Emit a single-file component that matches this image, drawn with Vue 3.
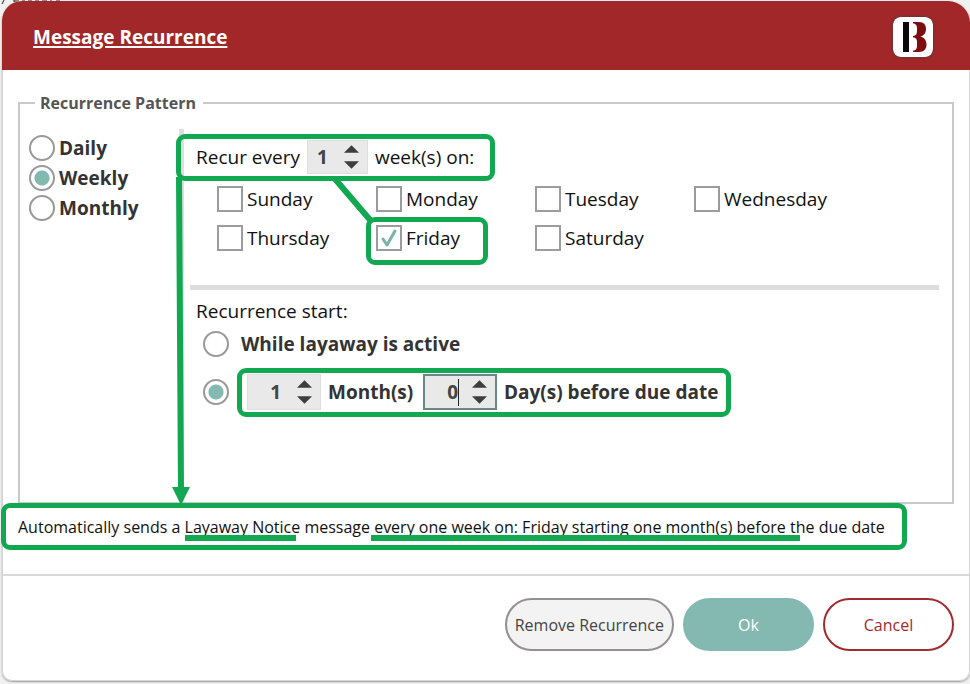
<script setup>
import { ref } from 'vue'

const patterns = ['Daily', 'Weekly', 'Monthly']
const pattern = ref('Weekly')
const days = ['Sunday', 'Monday', 'Tuesday', 'Wednesday', 'Thursday', 'Friday', 'Saturday']
const selectedDays = ref(['Friday'])
const start = ref('before')
const weeks = ref(1)
const months = ref(1)
const dueDays = ref(0)
</script>

<template>
  <div class="page">
    <svg class="backdrop" viewBox="0 0 64 4" aria-hidden="true">
      <path d="M4 0L2 4M14 0V2M14 1H19M22 1H25M28 1H32M35 1H39M42 1H47M50 1H52M56 1H60" />
    </svg>
    <main class="dialog">
      <header class="header">
        <h1>Message Recurrence</h1>
        <svg class="logo" viewBox="0 0 40 40" aria-hidden="true">
          <rect width="40" height="40" rx="7" fill="#fff" />
          <rect x="10" y="5" width="6" height="30" fill="#0c0809" />
          <path d="M20 5H26C31 5 33 8 33 12C33 16 31 18.500 27.500 19.500C31.500 20.500 33.500 24 33.500 27.500C33.500 32 31 35 26 35H20V33.800C22.500 33.500 24 32 24 29V25C24 22 23 20.500 20 20.200V19C23 18.500 24 17 24 14V11C24 8 22.500 6.500 20 6.200Z" fill="#7d0d10" />
        </svg>
      </header>

      <form class="body" @submit.prevent>
        <fieldset class="pattern">
          <legend>Recurrence Pattern</legend>
          <div class="columns">
            <div class="kinds">
              <label v-for="p in patterns" :key="p" class="choice">
                <input v-model="pattern" type="radio" name="pattern" :value="p" />
                <span>{{ p }}</span>
              </label>
            </div>

            <div class="details">
              <div class="recur marked">
                <label for="weeks">Recur every</label>
                <div class="spinner small">
                  <input id="weeks" v-model.number="weeks" type="text" inputmode="numeric" />
                  <div class="arrows">
                    <button type="button" aria-label="More weeks" @click="weeks++"><svg viewBox="0 0 16 8"><path d="M0 8L8 0L16 8Z" /></svg></button>
                    <button type="button" aria-label="Fewer weeks" @click="weeks--"><svg viewBox="0 0 16 8"><path d="M0 0L8 8L16 0Z" /></svg></button>
                  </div>
                </div>
                <span>week(s) on:</span>
              </div>

              <div class="days">
                <label v-for="d in days" :key="d" class="day" :class="{ marked: d === 'Friday' }">
                  <span class="tick">
                    <input v-model="selectedDays" type="checkbox" :value="d" />
                    <svg v-if="selectedDays.includes(d)" viewBox="0 0 26 26"><path d="M7 14L11 20L19 6" /></svg>
                  </span>
                  <span>{{ d }}</span>
                </label>
              </div>

              <hr />

              <p class="start-title">Recurrence start:</p>
              <label class="choice active-choice">
                <input v-model="start" type="radio" name="start" value="active" />
                <span>While layaway is active</span>
              </label>
              <div class="before">
                <input v-model="start" type="radio" name="start" value="before" aria-label="Before due date" />
                <div class="offset marked">
                  <div class="spinner">
                    <input id="months" v-model.number="months" type="text" inputmode="numeric" />
                    <div class="arrows">
                      <button type="button" aria-label="More months" @click="months++"><svg viewBox="0 0 16 8"><path d="M0 8L8 0L16 8Z" /></svg></button>
                      <button type="button" aria-label="Fewer months" @click="months--"><svg viewBox="0 0 16 8"><path d="M0 0L8 8L16 0Z" /></svg></button>
                    </div>
                  </div>
                  <label for="months">Month(s)</label>
                  <div class="spinner current">
                    <input id="due-days" v-model.number="dueDays" type="text" inputmode="numeric" />
                    <i class="caret"></i>
                    <div class="arrows">
                      <button type="button" aria-label="More days" @click="dueDays++"><svg viewBox="0 0 16 8"><path d="M0 8L8 0L16 8Z" /></svg></button>
                      <button type="button" aria-label="Fewer days" @click="dueDays--"><svg viewBox="0 0 16 8"><path d="M0 0L8 8L16 0Z" /></svg></button>
                    </div>
                  </div>
                  <label for="due-days">Day(s) before due date</label>
                </div>
              </div>

              <svg class="callouts" width="320" height="376" viewBox="0 0 320 376" aria-hidden="true">
                <path class="line" d="M0 48L2 362M156 50L192 92" />
                <path class="head" d="M-7 358H11L2 376Z" />
              </svg>
            </div>
          </div>
        </fieldset>

        <p class="summary"><span class="note marked">Automatically sends a <span class="key">Layaway Notice</span> message <span class="key wide">every one week on: Friday starting one month(s) before t</span>he due date</span></p>

        <footer class="actions">
          <button type="button" class="remove">Remove Recurrence</button>
          <button type="submit" class="ok">Ok</button>
          <button type="button" class="cancel">Cancel</button>
        </footer>
      </form>
    </main>
  </div>
</template>

<style>
body { background: #f1f1f1; }
</style>

<style scoped>
* { box-sizing: border-box; }
.page {
  position: relative;
  padding: 1px 0 2px 2px;
  font-family: "Segoe UI", "Open Sans", "Noto Sans", sans-serif;
  font-size: 19px;
  line-height: 26px;
  color: #111;
}
.backdrop { position: absolute; left: 0; top: 0; width: 64px; height: 4px; fill: none; stroke: #222; stroke-width: 1; }
.dialog {
  position: relative;
  border-radius: 20px 22px 10px 10px;
  background: #fff;
  box-shadow: 0 1px 2px #999;
}
.header {
  display: flex;
  align-items: center;
  justify-content: space-between;
  padding: 16px 37px 13px 31px;
  border-radius: 20px 22px 0 0;
  background: #a12729;
}
.header h1 { margin: 0; font-size: 19px; font-weight: 700; color: #fff; text-decoration: underline; text-decoration-thickness: 2px; text-underline-offset: 2px; }
.logo { width: 40px; height: 40px; border-radius: 8px; box-shadow: 0 0 2px 1px #6b3535; }
.body { border: solid #d4d4d4; border-width: 0 1px 1px; border-radius: 0 0 10px 10px; padding-top: 20px; }
.pattern { margin: 0 15px; padding: 0; border: 2px solid #c9c9c9; min-width: 0; }
legend { margin-left: 15px; padding: 0 7px 0 5px; font-size: 16px; font-weight: 700; line-height: 26px; color: #555; }
.columns { display: flex; padding-top: 13px; }
.kinds { display: flex; flex-direction: column; gap: 4px; width: 159px; padding: 6px 0 0 9px; }
.choice { display: flex; align-items: center; gap: 4px; font-weight: 700; color: #333; }
input[type="radio"] {
  appearance: none;
  flex: none;
  width: 26px;
  height: 26px;
  margin: 0;
  border: 2px solid #999;
  border-radius: 50%;
  background: #fff;
}
input[type="radio"]:checked { background: radial-gradient(circle, #83b9b1 7px, #fff 8px); }
.details { position: relative; flex: 1; padding: 11px 13px 92px 12px; border-left: 5px solid #dedede; }
.marked { position: relative; }
.marked::after {
  content: "";
  position: absolute;
  border: 5px solid #12a852;
  border-radius: 9px;
  pointer-events: none;
}
.recur { display: flex; align-items: center; gap: 7px; width: fit-content; }
.recur::after { inset: -6px -21px -7px -20px; }
.spinner { position: relative; display: flex; align-items: center; width: 74px; height: 36px; background: #e9e9e9; border: 1px solid #dedede; }
.spinner.small { width: 61px; height: 34px; }
.spinner input {
  flex: 1;
  min-width: 0;
  padding: 0 16px 0 0;
  border: 0;
  outline: 0;
  background: none;
  font: inherit;
  font-weight: 700;
  text-align: right;
  color: #444;
}
.spinner.current { border: 2px solid #668987; }
.current input { padding-right: 14px; }
.caret { position: absolute; left: 33px; top: 3px; width: 1px; height: 27px; background: #222; }
.arrows { display: flex; flex-direction: column; gap: 8px; padding-right: 8px; }
.arrows button { display: block; padding: 0; border: 0; background: none; width: 15px; height: 8px; }
.arrows svg { display: block; width: 15px; height: 8px; fill: #3d3d3d; }
.days { display: grid; grid-template-columns: repeat(4, 159px); gap: 13px 0; padding: 12px 0 0 21px; }
.day { display: flex; align-items: center; gap: 4px; width: fit-content; }
.day.marked::after { inset: -8px -28px -14px -10px; }
.tick { position: relative; width: 26px; height: 26px; }
.tick input { appearance: none; display: block; width: 26px; height: 26px; margin: 0; border: 2px solid #9c9c9c; background: #fff; }
.tick svg { position: absolute; inset: 0; fill: none; stroke: #79b3ab; stroke-width: 3; stroke-linecap: round; stroke-linejoin: round; }
hr { margin: 34px 0 8px -6px; border: 0; height: 5px; background: #dedede; }
.start-title { margin: 0 0 7px; }
.active-choice { gap: 12px; margin-left: 7px; }
.before { display: flex; align-items: center; gap: 18px; margin: 17px 0 0 7px; }
.offset { display: flex; align-items: center; gap: 7px; font-weight: 700; color: #333; }
.offset label { min-width: 88px; }
.offset::after { inset: -6px -13px -7px -10px; }
.callouts { position: absolute; left: -5px; top: 0; overflow: visible; pointer-events: none; }
.line { fill: none; stroke: #12a852; stroke-width: 6; }
.head { fill: #12a852; }
.summary { margin: 0; padding: 10px 15px 34px; font-size: 16px; }
.note { display: inline-block; }
.note::after { inset: -11px -22px -10px -17px; }
.key { position: relative; }
.key::after { content: ""; position: absolute; left: 0; right: 4px; bottom: -3px; height: 6px; background: #12a852; }
.key.wide::after { left: -3px; right: -4px; }
.actions { display: flex; justify-content: flex-end; gap: 9px; padding: 22px 15px 29px; border-top: 2px solid #dadada; }
.actions button { height: 53px; min-width: 131px; padding: 0 8px; border: 2px solid; border-radius: 27px; font: inherit; font-size: 16px; }
.actions .remove { border-color: #949090; background: #f3f3f3; color: #444; }
.actions .ok { border-color: #83b9b1; background: #83b9b1; color: #fff; }
.actions .cancel { border-color: #a12c30; background: #fff; color: #a12c30; }
</style>
